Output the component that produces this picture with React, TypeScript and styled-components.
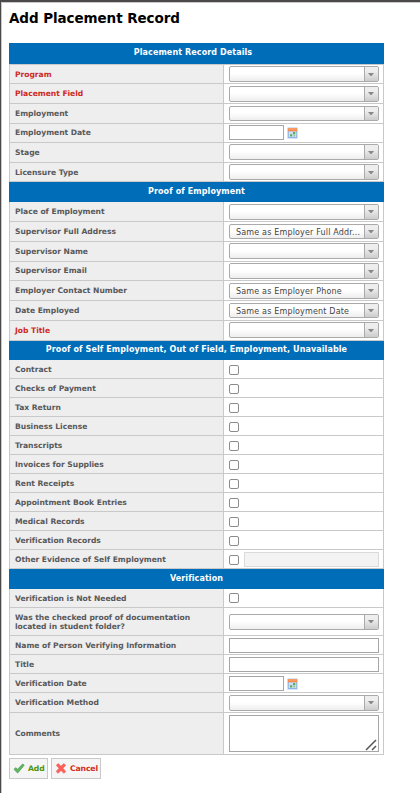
import React from "react";
import styled, { createGlobalStyle, css } from "styled-components";

const GlobalStyle = createGlobalStyle`
  *, *::before, *::after { box-sizing: border-box; }
  body { margin: 0; background: #fff; font-family: Verdana, "DejaVu Sans", sans-serif; }
`;

const Dialog = styled.main`
  height: 793px;
  padding: 7px 0 0 7px;
  background: #fff;
  border-left: 1px solid #4b494a;
  border-top: 2px solid #4b494a;
  box-shadow: inset 1px 1px 0 #c9c9c9;
`;

const Title = styled.h1`
  margin: 0 0 0 1px;
  height: 34px;
  font-size: 13.5px;
  line-height: 18px;
  font-weight: 700;
  letter-spacing: -0.08px;
  color: #000;
  white-space: nowrap;
`;

const Form = styled.form`
  width: 375px;
  margin-left: 1px;
`;

const SectionHeader = styled.h2<{ $h: number; $shift?: number }>`
  margin: 0;
  height: ${(p) => p.$h}px;
  padding: ${(p) => (p.$h < 20 ? 3 : 4)}px ${(p) => p.$shift ?? 0}px 0 0;
  background: #006db8;
  color: #fff;
  font-size: 8px;
  line-height: 11px;
  font-weight: 700;
  letter-spacing: 0.1px;
  text-align: center;
  white-space: nowrap;
`;

const Rows = styled.div<{ $topLine?: boolean }>`
  border: solid #c9c9c9;
  border-width: ${(p) => (p.$topLine ? "1px 1px 0" : "0 1px")};
`;

const Row = styled.div<{ $h: number }>`
  display: grid;
  grid-template-columns: 214px 1fr;
  height: ${(p) => p.$h}px;
  border-bottom: 1px solid #c9c9c9;
`;

const Label = styled.label<{ $required?: boolean; $top: number }>`
  padding: ${(p) => p.$top}px 0 0 5px;
  background: #eee;
  border-right: 1px solid #c9c9c9;
  color: ${(p) => (p.$required ? "#cf2a1e" : "#58595b")};
  font-size: 7.6px;
  line-height: 9px;
  font-weight: 700;
  letter-spacing: -0.03px;
  white-space: pre;
`;

const Field = styled.div<{ $top: number }>`
  display: flex;
  align-items: flex-start;
  padding: ${(p) => p.$top}px 4px 0 5px;
`;

const SelectBox = styled.div<{ $h: number }>`
  display: flex;
  width: 150px;
  height: ${(p) => p.$h}px;
  border: 1px solid #aaa;
  border-radius: 2px;
  background: linear-gradient(#fff 45%, #eee);
  overflow: hidden;
`;

const SelectValue = styled.span`
  flex: 1;
  padding-left: 6px;
  font-size: 8px;
  line-height: 15px;
  letter-spacing: 0.17px;
  color: #444;
  white-space: nowrap;
`;

const SelectArrow = styled.span<{ $top: number }>`
  display: flex;
  justify-content: center;
  width: 14px;
  padding: ${(p) => p.$top}px 1px 0 0;
  border-left: 1px solid #aaa;
  background: linear-gradient(#eee 30%, #ccc);
  svg { display: block; }
`;

const boxed = css`
  display: block;
  margin: 0;
  padding: 0 3px;
  border: 1px solid #a6a6a6;
  border-radius: 0;
  background: #fff;
  outline: none;
`;

const TextInput = styled.input<{ $w: number }>`
  ${boxed}
  width: ${(p) => p.$w}px;
  height: 15px;
  font: 8px Verdana, "DejaVu Sans", sans-serif;
  &:disabled { background: #f3f3f3; border-color: #dadada; }
`;

const Check = styled.input`
  appearance: none;
  width: 10px;
  height: 10px;
  margin: 0;
  border: 1px solid #8c8c8c;
  border-radius: 2px;
  background: #fff;
`;

const EvidenceField = styled(Field)`
  gap: 5px;
  ${Check} { margin-top: 3px; }
`;

const DateField = styled(Field)`
  gap: 3px;
  svg { margin-top: 2px; }
`;

const CommentsWrap = styled.div`
  display: grid;
`;

const Comments = styled.textarea`
  ${boxed}
  grid-area: 1 / 1;
  width: 150px;
  height: 37px;
  resize: none;
`;

const Grip = styled.svg`
  grid-area: 1 / 1;
  place-self: end;
  margin: 0 2px 1px 0;
`;

const Actions = styled.div`
  display: flex;
  gap: 3px;
  margin-top: 3px;
`;

const ActionButton = styled.button<{ $w: number; $color: string }>`
  display: flex;
  align-items: center;
  gap: 3px;
  width: ${(p) => p.$w}px;
  height: 21px;
  padding: 0 0 0 3px;
  border: 1px solid #c9c9c9;
  background: #f5f5f5;
  color: ${(p) => p.$color};
  font: 700 7.7px/11px Verdana, "DejaVu Sans", sans-serif;
  letter-spacing: -0.13px;
  white-space: nowrap;
  svg { flex: none; }
`;

const CalendarIcon = () => (
  <svg width="11" height="12" viewBox="0 0 12 12" preserveAspectRatio="none">
    <rect width="12" height="12" rx="1.5" fill="#d5e4fa" />
    <rect x="1" y="1" width="10" height="10" rx="0.5" fill="#8db4e8" />
    <rect x="1" y="1" width="10" height="3.5" rx="0.8" fill="#f58a4b" />
    <rect x="1.5" y="1.5" width="9" height="1" fill="#ffad78" />
    <rect x="2" y="4.5" width="8" height="5.5" fill="#d9e6f8" />
    <path d="M4.5 4.5v5.5M7 4.5v5.5M2 7h8" stroke="#b8cfee" strokeWidth="0.5" />
    <rect x="6.5" y="5" width="2.5" height="2.2" fill="#5faa58" />
    <rect x="3.2" y="7.3" width="2.5" height="2.2" fill="#5faa58" />
    <rect x="7" y="7.8" width="2" height="1.7" fill="#8cc387" />
  </svg>
);

const CheckIcon = () => (
  <svg width="12" height="11" viewBox="0 0 12 11">
    <path d="M1 6.2 2.8 4.7 4.6 6.3 9.6 1 11.2 2.2 5 9.7 4.2 9.7Z" fill="#65b565" stroke="#3f9b47" strokeWidth="0.7" strokeLinejoin="round" />
  </svg>
);

const CrossIcon = () => (
  <svg width="12" height="11" viewBox="0 0 12 11">
    <path d="M1.3 2.3 3.2.6 6 3.3 8.8.6 10.7 2.3 8 5.3 10.7 8.5 8.9 10.3 6 7.4 3.1 10.3 1.2 8.5 4 5.3Z" fill="#ff5c58" stroke="#ed6c68" strokeWidth="0.7" strokeLinejoin="round" />
  </svg>
);

const Select = ({ value, h = 16, arrowTop }: { value?: string; h?: number; arrowTop: number }) => (
  <SelectBox $h={h}>
    <SelectValue>{value}</SelectValue>
    <SelectArrow $top={arrowTop}>
      <svg width="6" height="3" viewBox="0 0 6 3"><path d="M0 0h6L3.5 3h-1Z" fill="#888" /></svg>
    </SelectArrow>
  </SelectBox>
);

type Item = {
  label: string;
  kind: "select" | "date" | "check" | "evidence" | "text" | "comments";
  h: number;
  top: number;
  labelTop?: number;
  required?: boolean;
  value?: string;
  boxH?: number;
};

type Section = { title: string; h: number; shift?: number; items: Item[] };

const check = (label: string): Item => ({ label, kind: "check", h: 19, top: 5 });

const sections: Section[] = [
  {
    title: "Placement Record Details",
    h: 21,
    shift: 7,
    items: [
      { label: "Program", kind: "select", h: 19, top: 1, required: true },
      { label: "Placement Field", kind: "select", h: 20, top: 2, required: true },
      { label: "Employment", kind: "select", h: 20, top: 2, boxH: 15 },
      { label: "Employment Date", kind: "date", h: 19, top: 1, labelTop: 4 },
      { label: "Stage", kind: "select", h: 20, top: 1 },
      { label: "Licensure Type", kind: "select", h: 19, top: 1 },
    ],
  },
  {
    title: "Proof of Employment",
    h: 20,
    items: [
      { label: "Place of Employment", kind: "select", h: 20, top: 2 },
      { label: "Supervisor Full Address", kind: "select", h: 20, top: 2, boxH: 15, value: "Same as Employer Full Addr..." },
      { label: "Supervisor Name", kind: "select", h: 20, top: 1 },
      { label: "Supervisor Email", kind: "select", h: 19, top: 1, labelTop: 4 },
      { label: "Employer Contact Number", kind: "select", h: 20, top: 2, value: "Same as Employer Phone" },
      { label: "Date Employed", kind: "select", h: 20, top: 2, boxH: 15, value: "Same as Employment Date" },
      { label: "Job Title", kind: "select", h: 20, top: 1, required: true },
    ],
  },
  {
    title: "Proof of Self Employment, Out of Field, Employment, Unavailable",
    h: 19,
    items: [
      check("Contract"),
      check("Checks of Payment"),
      check("Tax Return"),
      check("Business License"),
      check("Transcripts"),
      check("Invoices for Supplies"),
      check("Rent Receipts"),
      check("Appointment Book Entries"),
      check("Medical Records"),
      check("Verification Records"),
      { label: "Other Evidence of Self Employment", kind: "evidence", h: 19, top: 2 },
    ],
  },
  {
    title: "Verification",
    h: 20,
    items: [
      { label: "Verification is Not Needed", kind: "check", h: 19, top: 4 },
      { label: "Was the checked proof of documentation\nlocated in student folder?", kind: "select", h: 28, top: 6 },
      { label: "Name of Person Verifying Information", kind: "text", h: 19, top: 2 },
      { label: "Title", kind: "text", h: 19, top: 2 },
      { label: "Verification Date", kind: "date", h: 19, top: 2 },
      { label: "Verification Method", kind: "select", h: 20, top: 2 },
      { label: "Comments", kind: "comments", h: 42, top: 2, labelTop: 16 },
    ],
  },
];

const Control = ({ item }: { item: Item }) => {
  switch (item.kind) {
    case "select":
      return (
        <Field $top={item.top}>
          <Select value={item.value} h={item.boxH} arrowTop={item.top === 1 ? 6 : 5} />
        </Field>
      );
    case "date":
      return <DateField $top={item.top}><TextInput $w={55} /><CalendarIcon /></DateField>;
    case "check":
      return <Field $top={item.top}><Check type="checkbox" /></Field>;
    case "evidence":
      return <EvidenceField $top={item.top}><Check type="checkbox" /><TextInput $w={135} disabled /></EvidenceField>;
    case "text":
      return <Field $top={item.top}><TextInput $w={150} /></Field>;
    case "comments":
      return (
        <Field $top={item.top}>
          <CommentsWrap>
            <Comments />
            <Grip width="12" height="12" viewBox="0 0 12 12">
              <path d="M1 11 11 1M7 11 11 7" stroke="#555" strokeWidth="1.5" />
            </Grip>
          </CommentsWrap>
        </Field>
      );
  }
};

export default function App() {
  return (
    <>
      <GlobalStyle />
      <Dialog>
        <Title>Add Placement Record</Title>
        <Form>
          {sections.map((section, i) => (
            <section key={section.title}>
              <SectionHeader $h={section.h} $shift={section.shift}>{section.title}</SectionHeader>
              <Rows $topLine={i === 0}>
                {section.items.map((item) => (
                  <Row key={item.label} $h={item.h}>
                    <Label $required={item.required} $top={item.labelTop ?? 5}>{item.label}</Label>
                    <Control item={item} />
                  </Row>
                ))}
              </Rows>
            </section>
          ))}
          <Actions>
            <ActionButton type="button" $w={39} $color="#4e9410"><CheckIcon />Add</ActionButton>
            <ActionButton type="button" $w={50} $color="#d22b20"><CrossIcon />Cancel</ActionButton>
          </Actions>
        </Form>
      </Dialog>
    </>
  );
}
